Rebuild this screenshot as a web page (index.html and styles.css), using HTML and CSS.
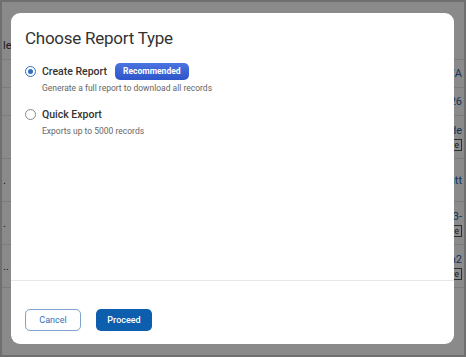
FILE: index.html
```html
<!DOCTYPE html>
<html lang="en">

<head>
    <meta charset="UTF-8">
    <meta name="viewport" content="width=device-width, initial-scale=1.0">
    <title>Choose Report Type</title>
    <link rel="stylesheet" href="styles.css">
</head>

<body>

    <div class="frame">
        <!-- page behind the dialog -->
        <div class="page">
            <div class="row"><span class="cell-left">le</span><span class="cell-right"></span></div>
            <div class="row"><span class="cell-left"></span><span class="cell-right link">N/A</span></div>
            <div class="row"><span class="cell-left"></span><span class="cell-right link">26</span></div>
            <div class="row tall"><span class="cell-left"></span><span class="cell-right"><span class="link">-de</span><span class="tag">re</span></span></div>
            <div class="row tall"><span class="cell-left dot">.</span><span class="cell-right link">ntt</span></div>
            <div class="row tall"><span class="cell-left dot">.</span><span class="cell-right"><span class="link">l3-</span><span class="tag">re</span></span></div>
            <div class="row tall"><span class="cell-left dot">..</span><span class="cell-right"><span class="link">n2</span><span class="tag">re</span></span></div>
        </div>

        <div class="overlay">
            <div class="modal">
                <div class="modal-body">
                    <h1>Choose Report Type</h1>

                    <label class="option">
                        <span class="radio checked"></span>
                        <span class="option-text">
                            <span class="option-title">Create Report <span class="badge">Recommended</span></span>
                            <span class="option-desc">Generate a full report to download all records</span>
                        </span>
                    </label>

                    <label class="option">
                        <span class="radio"></span>
                        <span class="option-text">
                            <span class="option-title">Quick Export</span>
                            <span class="option-desc">Exports up to 5000 records</span>
                        </span>
                    </label>
                </div>

                <div class="modal-footer">
                    <a href="#" class="btn btn-outline">Cancel</a>
                    <a href="#" class="btn btn-primary">Proceed</a>
                </div>
            </div>
        </div>
    </div>

</body>

</html>
```

FILE: styles.css
```css
* {
    margin: 0;
    padding: 0;
    box-sizing: border-box;
}

body {
    font-family: Roboto, "Liberation Sans", Arial, sans-serif;
    background-color: #ffffff;
    color: #333333;
    width: 466px;
    height: 357px;
    overflow: hidden;
}

.frame {
    position: relative;
    width: 466px;
    height: 357px;
    border: 2px solid #6f6f6f;
    overflow: hidden;
}

/* faded table behind the dialog */
.page {
    padding-top: 30px;
    font-size: 11px;
}

.row {
    display: flex;
    justify-content: space-between;
    height: 28px;
    border-bottom: 1px solid #e4e4e4;
    align-items: center;
}

.row.tall {
    height: 43px;
}

.cell-left {
    color: #333333;
    padding-left: 1px;
}

.cell-right {
    display: flex;
    flex-direction: column;
    align-items: flex-end;
    gap: 2px;
    padding-right: 2px;
}

.link {
    color: #2a5ea8;
}

.tag {
    border: 1px solid #555555;
    font-size: 9px;
    padding: 0 2px;
    color: #333333;
}

.overlay {
    position: absolute;
    inset: 0;
    background-color: rgba(0, 0, 0, 0.46);
    padding: 11px 10px 11px 9px;
    display: flex;
}

.modal {
    flex: 1;
    background-color: #ffffff;
    border-radius: 9px;
    display: flex;
    flex-direction: column;
}

.modal-body {
    flex: 1;
    padding: 15px 14px 0;
    border-bottom: 1px solid #e6e8eb;
}

h1 {
    font-size: 17px;
    font-weight: 400;
    letter-spacing: -0.25px;
    color: #333333;
    margin-bottom: 15px;
}

.option {
    display: flex;
    gap: 6px;
    margin-bottom: 13px;
}

.radio {
    width: 11px;
    height: 11px;
    border: 1px solid #8a8a8a;
    border-radius: 50%;
    margin-top: 3px;
    flex-shrink: 0;
    display: flex;
    align-items: center;
    justify-content: center;
}

.radio.checked {
    border-color: #2f6fc4;
}

.radio.checked::after {
    content: "";
    width: 5px;
    height: 5px;
    border-radius: 50%;
    background-color: #2f6fc4;
}

.option-text {
    display: flex;
    flex-direction: column;
}

.option-title {
    font-size: 10.5px;
    font-weight: 500;
    color: #333333;
    display: flex;
    align-items: center;
    gap: 8px;
    height: 17px;
}

.badge {
    background: linear-gradient(#4a74e0, #2e55c9);
    color: #ffffff;
    font-size: 8.5px;
    font-weight: 700;
    padding: 0 8px;
    height: 17px;
    line-height: 17px;
    border-radius: 5px;
}

.option-desc {
    font-size: 8.5px;
    color: #666666;
    margin-top: 3px;
}

.modal-footer {
    display: flex;
    gap: 15px;
    padding: 28px 14px 13px;
}

.btn {
    text-decoration: none;
    width: 56px;
    height: 22px;
    border-radius: 5px;
    font-size: 9px;
    display: flex;
    align-items: center;
    justify-content: center;
}

.btn-outline {
    border: 1px solid #7ea3cc;
    color: #2f6fb8;
    background-color: #ffffff;
}

.btn-primary {
    background-color: #0d5eac;
    color: #ffffff;
    font-weight: 500;
}
```
